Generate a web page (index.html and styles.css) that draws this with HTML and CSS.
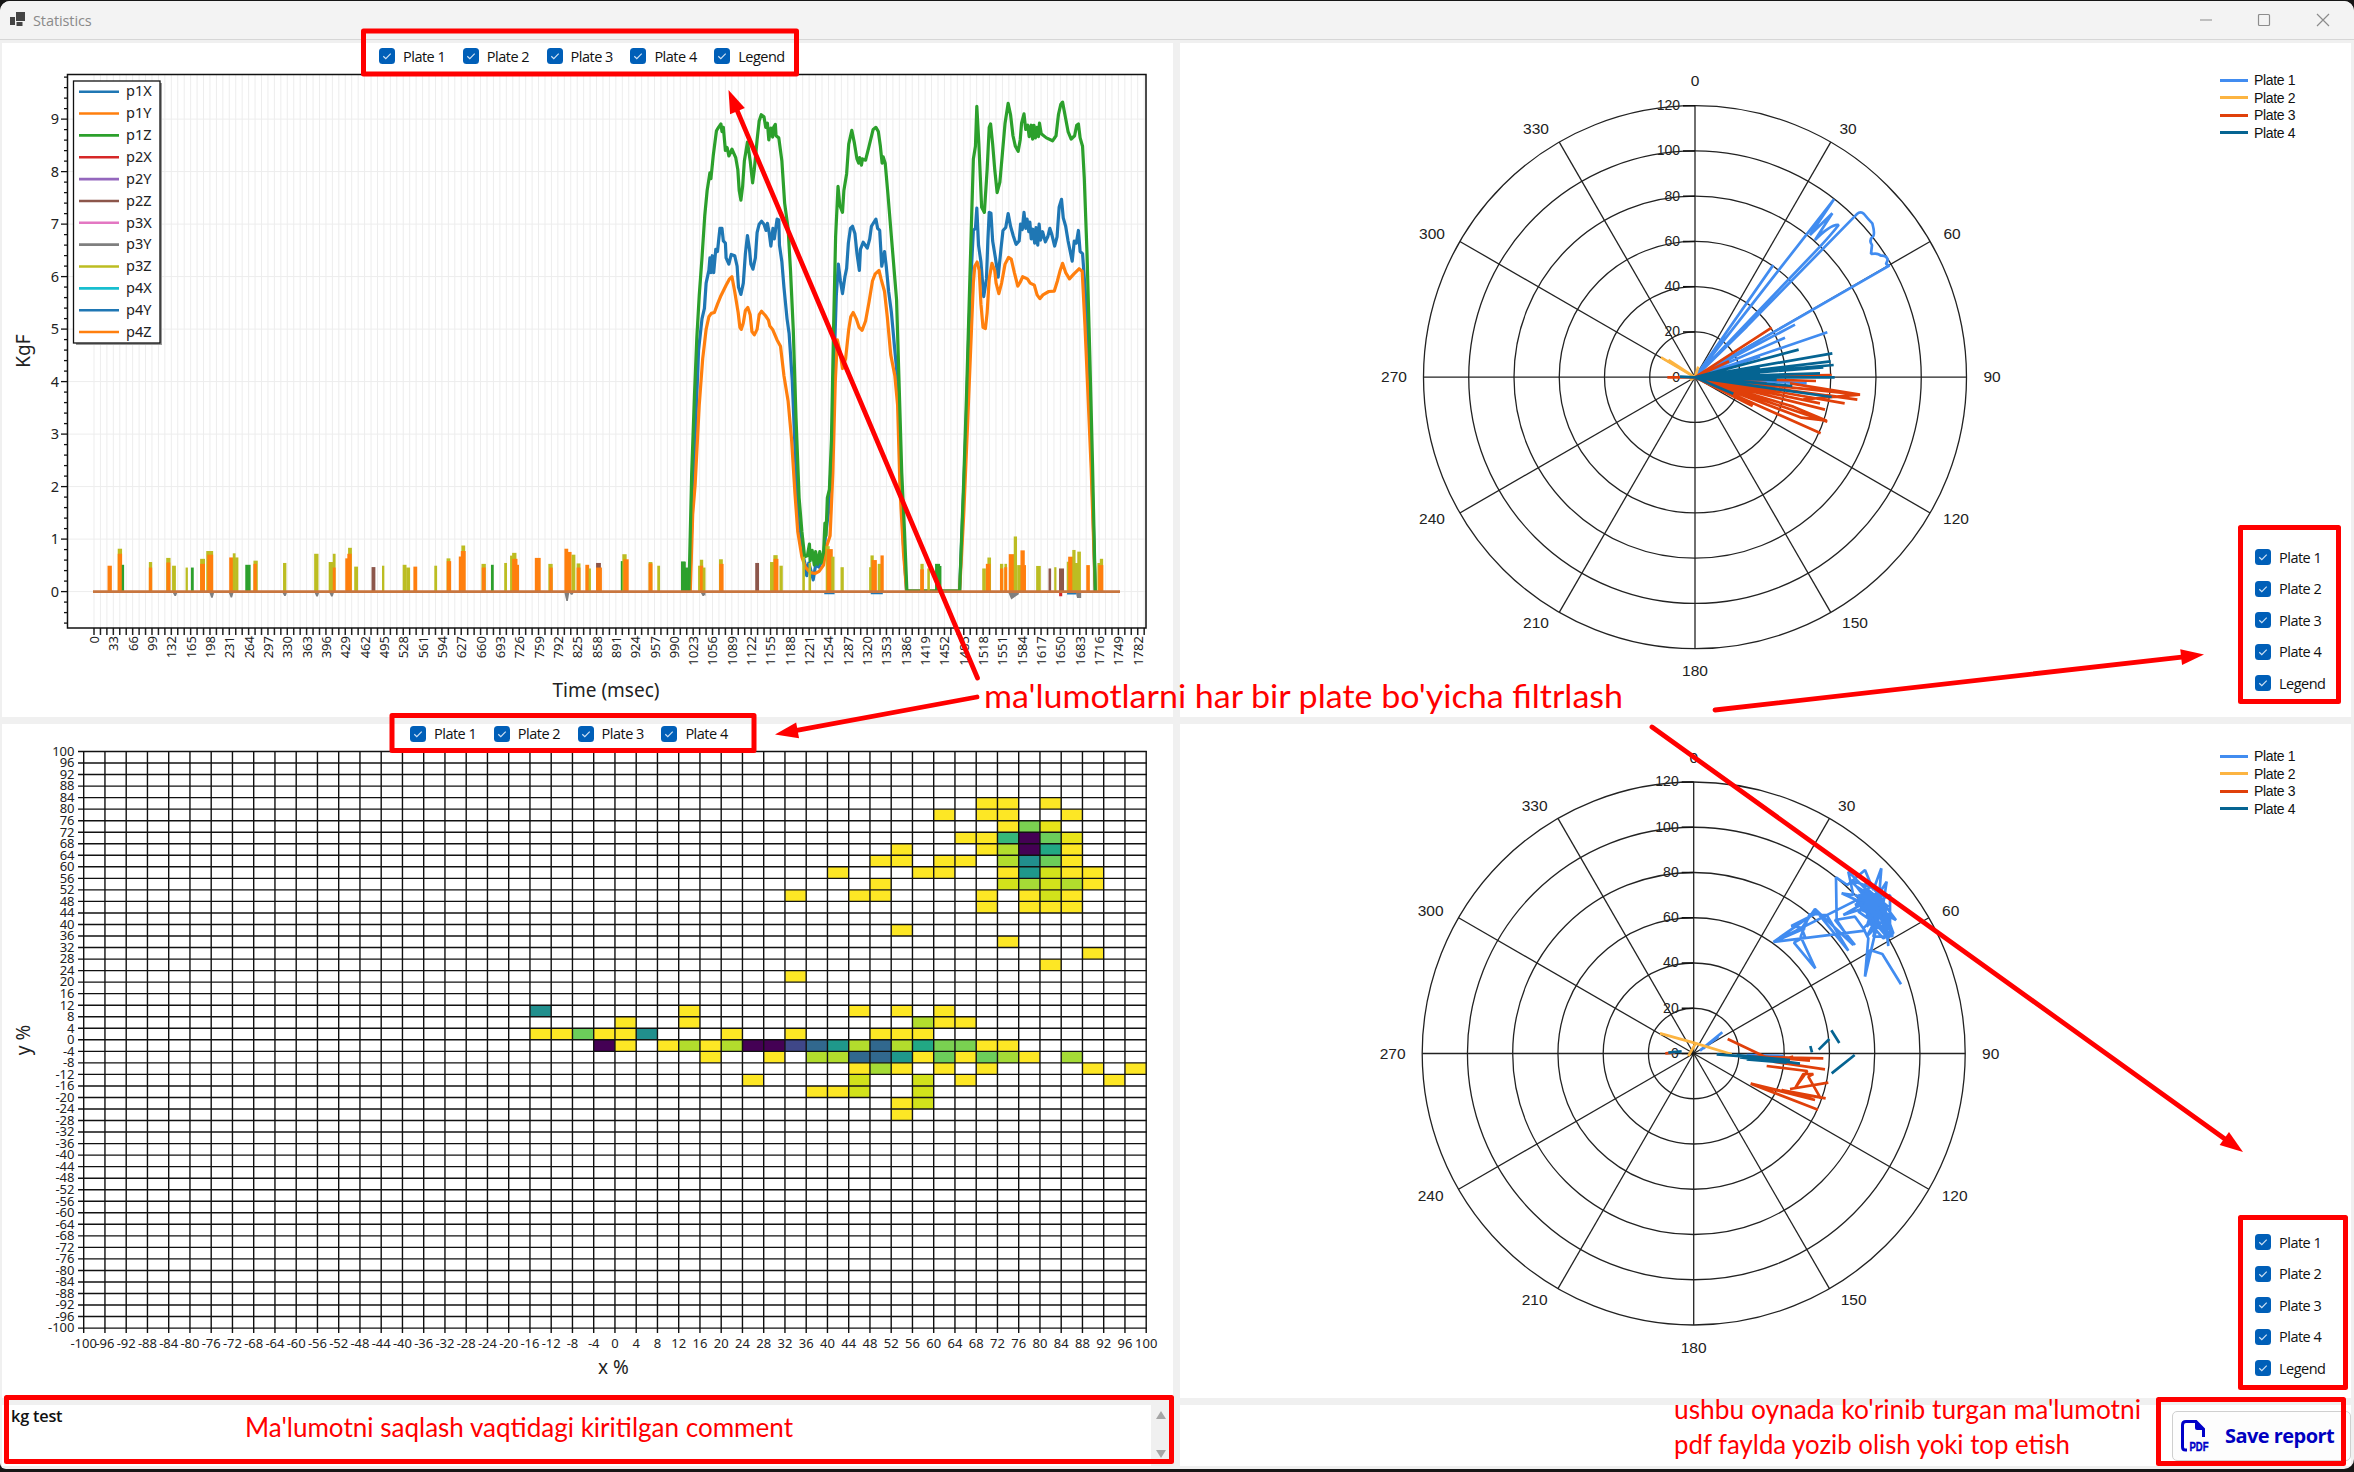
FILE: index.html
```html
<!DOCTYPE html>
<html lang="uz">
<head>
<meta charset="utf-8">
<title>Statistics</title>
<link rel="stylesheet" href="styles.css">
</head>
<body>
<div class="window">
  <header class="titlebar">
    <svg class="app-icon" viewBox="0 0 16 15"><path d="M6 0h9v9H6zM0 5h5v8H0zM6.500 10h6v4h-6z" fill="#444"/></svg>
    <span class="title">Statistics</span>
    <svg class="controls" viewBox="0 0 132 16" fill="none" stroke="#8c8c8c" stroke-width="1.200"><path d="M1 8h12"/><rect x="59.500" y="2.500" width="11" height="11" rx="1"/><path d="M118 2l12 12M130 2l-12 12"/></svg>
  </header>
  <main class="grid">
    <section class="panel column">
      <div class="checks bar first" data-items="Plate 1,Plate 2,Plate 3,Plate 4,Legend"></div>
      <svg class="chart" id="force" viewBox="2 73 1171 644"></svg>
    </section>
    <section class="panel">
      <svg class="chart" id="polarA" viewBox="1180 43 1040 674"></svg>
      <aside class="side">
        <ul class="keys"><li class="k1">Plate 1</li><li class="k2">Plate 2</li><li class="k3">Plate 3</li><li class="k4">Plate 4</li></ul>
        <div class="checks stack" data-items="Plate 1,Plate 2,Plate 3,Plate 4,Legend"></div>
      </aside>
    </section>
    <section class="panel column">
      <div class="checks bar second" data-items="Plate 1,Plate 2,Plate 3,Plate 4"></div>
      <svg class="chart" id="heat" viewBox="2 744 1171 654"></svg>
    </section>
    <section class="panel">
      <svg class="chart" id="polarB" viewBox="1180 724 1040 674"></svg>
      <aside class="side lower">
        <ul class="keys"><li class="k1">Plate 1</li><li class="k2">Plate 2</li><li class="k3">Plate 3</li><li class="k4">Plate 4</li></ul>
        <div class="checks stack" data-items="Plate 1,Plate 2,Plate 3,Plate 4,Legend"></div>
      </aside>
    </section>
    <section class="panel comment">
      <p>kg test</p>
      <div class="scroll"><i class="up"></i><i class="down"></i></div>
    </section>
    <section class="panel actions">
      <button class="save">
        <svg viewBox="0 0 28 32"><path d="M6 30H4.500Q1.500 30 1.500 27V5Q1.500 1.500 5 1.500H15L22.500 9V17" fill="none" stroke="#0000c8" stroke-width="3"/><path d="M14 1l9 9h-7q-2 0-2-2z" fill="#0000c8"/><text x="8.500" y="31" textLength="19" lengthAdjust="spacingAndGlyphs">PDF</text></svg>
        <span>Save report</span>
      </button>
    </section>
  </main>
</div>
<svg class="notes" id="notes" viewBox="0 0 2354 1472">
  <g class="frames">
    <rect x="363.500" y="31" width="433" height="43"/>
    <rect x="392" y="715.500" width="362" height="35"/>
    <rect x="6.500" y="1397.500" width="1165" height="64"/>
    <rect x="2240.500" y="527.500" width="98" height="174"/>
    <rect x="2240.500" y="1217.500" width="105" height="170"/>
    <rect x="2158.500" y="1399.500" width="185" height="64"/>
  </g>
  <text x="984" y="708" font-size="32" textLength="639" lengthAdjust="spacingAndGlyphs">ma'lumotlarni har bir plate bo'yicha filtrlash</text>
  <text x="245" y="1437" font-size="27" textLength="548" lengthAdjust="spacingAndGlyphs">Ma'lumotni saqlash vaqtidagi kiritilgan comment</text>
  <text x="1674" y="1419" font-size="27" textLength="467" lengthAdjust="spacingAndGlyphs">ushbu oynada ko'rinib turgan ma'lumotni</text>
  <text x="1674" y="1454" font-size="27" textLength="396" lengthAdjust="spacingAndGlyphs">pdf faylda yozib olish yoki top etish</text>
</svg>
<script src="charts.js"></script>
</body>
</html>
```
FILE: styles.css
```css
* { box-sizing: border-box; }
body { margin: 0; padding-top: 1px; width: 2354px; height: 1472px; overflow: hidden; background: #161616; font-family: "Open Sans", "Noto Sans", sans-serif; color: #111; }
.window { height: 1468px; background: #f0f0f0; border-radius: 10px 10px 10px 6px; overflow: hidden; display: flex; flex-direction: column; }
.titlebar { height: 39px; flex: none; background: #f3f3f3; border-bottom: 1px solid #d6d6d6; display: flex; align-items: center; padding: 0 23px 0 10px; }
.app-icon { width: 16px; height: 15px; margin-top: -2px; }
.title { font-size: 14.500px; color: #8a8a8a; margin-left: 7px; letter-spacing: -0.100px; }
.controls { width: 132px; height: 16px; margin-left: auto; }
.grid { display: grid; grid-template-columns: 1171px 1171px; grid-template-rows: 674px 674px 61px; gap: 7px; padding: 3px 2px; }
.panel { background: #fff; display: flex; overflow: hidden; min-width: 0; }
.column { flex-direction: column; }
.chart { display: block; flex: 1; min-height: 0; min-width: 0; overflow: visible; }
.checks { display: flex; flex: none; font-size: 14.500px; letter-spacing: -0.500px; }
.check { display: flex; align-items: center; gap: 8px; white-space: nowrap; }
.check svg { width: 16px; height: 16px; flex: none; }
.bar .check { width: 83.800px; }
.first { height: 30px; padding: 0 0 4px 377px; }
.second { height: 20px; padding: 0 0 1px 408px; }
.side { width: 131px; display: flex; flex-direction: column; justify-content: space-between; padding: 29px 0 18px; }
.lower { padding: 24px 0 14px; }
.keys { list-style: none; margin: 0; padding: 0; font: 14px/17.500px "Liberation Sans", sans-serif; letter-spacing: -0.350px; }
.keys li { display: flex; align-items: center; gap: 6px; }
.keys li::before { content: ""; width: 28px; height: 3px; background: currentColor; margin-top: -1px; }
.keys .k1::before { background: #418cf0; }
.keys .k2::before { background: #fcb441; }
.keys .k3::before { background: #e0400a; }
.keys .k4::before { background: #056492; }
.stack { flex-direction: column; padding-left: 35px; }
.stack .check { height: 31.500px; }
.comment { justify-content: space-between; }
.comment p { margin: 0 0 0 9px; font-size: 16.300px; font-weight: 600; letter-spacing: -0.200px; }
.scroll { width: 22px; background: #f0f0f0; display: flex; flex-direction: column; justify-content: space-between; padding: 6px 5px 8px; }
.scroll i { border: 5.500px solid transparent; width: 0; }
.scroll .up { border-top: 0; border-bottom: 8px solid #a5a5a5; }
.scroll .down { border-bottom: 0; border-top: 8px solid #a5a5a5; }
.actions { justify-content: flex-end; align-items: center; }
.save { width: 179px; height: 50px; border: 1px solid #cfcfcf; border-radius: 5px; background: #fdfdfd; display: flex; align-items: center; gap: 16px; padding: 0 0 0 8px; color: #0000c0; font: 700 20px "Open Sans", sans-serif; white-space: nowrap; letter-spacing: -0.550px; }
.save svg { width: 28px; height: 32px; flex: none; overflow: visible; }
.save text { font: 700 12px "Liberation Sans", sans-serif; fill: #0000c8; letter-spacing: 0; stroke: #0000c8; stroke-width: .4; }
.notes { position: absolute; left: 0; top: 0; width: 2354px; height: 1472px; pointer-events: none; fill: #f00; font-family: Lato, sans-serif; }
.frames rect { fill: none; stroke: #f00; stroke-width: 5; stroke-linejoin: round; }
.arrow { stroke: #f00; stroke-width: 4.800; stroke-linecap: round; }
.tick { font: 13px "Noto Sans", sans-serif; fill: #222; }
.ytick { font: 14.500px "Noto Sans", sans-serif; fill: #222; }
.axis { font: 19px "Noto Sans", sans-serif; fill: #222; text-anchor: middle; }
.angle { font: 15.500px "Liberation Sans", sans-serif; fill: #222; text-anchor: middle; }
.radial { font: 14px "Liberation Sans", sans-serif; fill: #222; text-anchor: end; }
.trace { fill: none; stroke-width: 3.200; stroke-linejoin: round; vector-effect: non-scaling-stroke; }
.ray { fill: none; stroke-width: 2.700; vector-effect: non-scaling-stroke; stroke-linejoin: bevel; }
```
FILE: charts.js
```js
const put = (id, html) => document.getElementById(id).insertAdjacentHTML('beforeend', html);
const line = (x1, y1, x2, y2, c = '#111', w = 1) => `<path d="M${x1} ${y1}L${x2} ${y2}" stroke="${c}" stroke-width="${w}"/>`;

// Check boxes
document.querySelectorAll('.checks').forEach(box => {
  box.innerHTML = box.dataset.items.split(',').map(t =>
    `<label class="check"><svg viewBox="0 0 16 16"><rect width="16" height="16" rx="3.500" fill="#005fb8"/><path d="M4.300 8.300L6.800 10.700L11.700 5.700" fill="none" stroke="#cfe2f5" stroke-width="1.200"/></svg>${t}</label>`).join('');
});

// Force over time
const BLUE = '#1f77b4', ORANGE = '#ff7f0e', GREEN = '#2ca02c', OLIVE = '#bcbd22', BROWN = '#8c564b', GREY = '#7f7f7f';
let s = '';
const tx = t => 94 + t * 0.5857, ty = v => 591.6 - v * 52.5;
for (let t = 0; t <= 1793; t += 11) {
  s += line(tx(t), 75, tx(t), 628, '#ededed') + line(tx(t), 628, tx(t), 635, '#222', 1.5);
  if (t % 33 === 0) s += `<text class="tick" text-anchor="end" transform="translate(${tx(t) + 5} 636) rotate(-90)">${t}</text>`;
}
for (let i = -3; i <= 49; i++) s += line(i % 5 ? 64 : 61, ty(i / 5), 67, ty(i / 5), '#111', 1.3);
for (let v = 0; v < 10; v++) s += line(67, ty(v), 1146, ty(v), '#ededed') + `<text class="ytick" text-anchor="end" x="59" y="${ty(v) + 5}">${v}</text>`;
const spikes = `215 7 1232 o;235 7 1195 y;235 7 1206 o;241 3 1230 g;295 5 1224 y;295 5 1236 o;330 7 1215 y;330 6 1225 o;341 6 1232 y;366 3 1236 y;377 4 1236 g;397 8 1217 y;397 8 1228 o;411 12 1200 y;412 10 1208 o;454 8 1214 o;459 4 1205 y;464 5 1214 y;486 9 1230 g;501 7 1221 y;500 5 1228 o;558 5 1226 y;620 7 1206 y;649 8 1224 y;655 4 1206 y;655 4 1236 o;680 5 1216 o;686 6 1193 y;685 7 1206 o;698 6 1234 y;732 6 1235 b;751 3 1232 y;793 6 1230 y;800 6 1236 y;814 6 1234 o;854 4 1232 y;879 6 1216 y;880 7 1222 o;903 6 1212 o;908 6 1188 y;908 8 1200 o;948 7 1228 y;948 6 1236 o;965 4 1230 g;991 4 1226 y;1003 5 1210 y;1008 7 1204 y;1009 9 1217 o;1014 5 1230 o;1054 10 1215 o;1079 7 1228 y;1080 5 1236 o;1110 6 1195 o;1116 7 1202 o;1124 6 1208 y;1134 6 1227 y;1134 6 1236 o;1151 6 1230 o;1156 3 1238 y;1173 8 1226 b;1174 10 1236 o;1220 5 1222 g;1224 7 1207 y;1227 9 1218 o;1275 6 1224 y;1275 6 1227 o;1291 4 1232 y;1339 7 1223 g;1346 7 1236 g;1372 6 1232 y;1375 5 1219 y;1375 5 1232 o;1380 4 1236 y;1413 6 1218 y;1414 7 1228 o;1484 6 1226 b;1514 8 1224 y;1520 7 1209 y;1521 8 1217 o;1531 5 1232 y`;
const late = `475 6 1180 y;493 6 1195 y;545 10 1155 y;551 16 1162 o;560 8 1180 y;587 8 1205 y;670 8 1205 y;674 8 1177 y;680 14 1188 o;695 8 1197 y;703 8 1177 o;819 8 1197 y;819 9 1210 o;838 6 1208 y;864 13 1197 g;871 7 1202 g;999 9 1208 y;1014 9 1182 y;1011 12 1197 o;1050 8 1197 y;1062 6 1197 y;1050 8 1208 o;1062 7 1205 o;1079 15 1174 o;1090 8 1132 y;1102 12 1200 y;1111 11 1165 o;1117 6 1200 o;1157 12 1202 y;1190 6 1208 b;1206 5 1205 y;1224 13 1208 b;1245 10 1192 y;1252 16 1180 o;1260 8 1164 y;1267 8 1195 y;1275 9 1168 y;1301 9 1200 o;1333 8 1195 y;1340 8 1185 y;1338 13 1200 o`;
const hue = { o: ORANGE, y: OLIVE, g: GREEN, b: BROWN };
const bars = (list, base) => list.split(';').map(r => { const [x, v, y, c] = r.split(' '), w = +v + 1.5; return `<rect x="${x - w / 2}" y="${y}" width="${w}" height="${base - y}" fill="${hue[c]}"/>`; }).join('');
const early = [[343, 1298], [415, 1302], [453, 1301], [558, 1298], [621, 1299], [650, 1299], [1111, 1309], [1120, 1295], [1378, 1298]];
s += `<g transform="scale(.5102 .45918)">${early.map(([x, y]) => `<path d="M${x - 5} 1289h10l-3 ${y - 1289}h-3z" fill="${GREY}"/>`).join('')}${bars(spikes, 1289)}</g>`;
const tr = (pts, c) => `<polyline class="trace" stroke="${c}" points="${pts}"/>`;
const blue = `144,1262 152,1060 160,900 170,690 180,615 187,590 192,530 200,500 203,470 206,505 210,465 214,505 220,450 225,455 232,400 238,400 242,430 248,435 250,470 258,485 265,462 275,465 282,490 286,540 293,557 300,530 306,460 312,417 318,450 322,485 328,497 335,470 340,410 346,390 353,383 360,390 366,405 370,388 375,410 380,442 386,400 390,425 398,378 403,380 405,440 412,480 418,540 427,615 433,650 442,760 450,920 460,1100 470,1165 480,1200 484,1225 490,1195 497,1215 503,1235 510,1200 520,1205 533,1180 540,1120 548,1070 557,930 563,740 570,560 576,485 582,525 588,555 595,515 600,495 605,435 611,400 617,395 624,412 630,460 637,500 640,450 648,433 660,447 667,425 672,395 685,378 690,400 696,405 702,490 710,455 715,490 722,550 730,600 740,690 748,760 755,950 765,1150 774,1262 928,1262 940,1020 948,840 955,640 962,500 968,405 974,400 978,352 983,440 990,480 998,562 1006,520 1010,430 1014,362 1019,364 1024,430 1032,470 1040,516 1048,450 1054,405 1062,398 1069,365 1076,395 1084,418 1092,438 1101,430 1105,390 1110,403 1115,362 1120,400 1124,378 1129,408 1132,385 1136,425 1141,402 1146,435 1150,398 1155,440 1159,390 1163,428 1169,408 1177,432 1184,420 1190,400 1195,412 1204,442 1211,420 1217,350 1224,331 1229,375 1236,395 1243,430 1255,478 1261,430 1267,435 1273,405 1278,455 1285,460 1293,550 1300,700 1310,920 1322,1262`;
const orange = `146,1262 153,1080 160,1010 172,820 182,710 192,640 200,610 207,602 216,600 225,580 235,560 250,535 260,520 267,515 275,550 285,600 290,635 294,640 300,625 306,595 313,588 320,605 325,645 332,653 340,640 346,605 353,597 364,607 373,618 377,632 385,640 398,665 408,680 418,750 430,810 440,900 450,1030 458,1120 470,1180 480,1205 495,1218 508,1220 520,1215 533,1200 542,1155 552,1130 560,980 567,765 573,665 580,690 588,733 597,710 606,640 612,610 619,600 628,615 636,635 645,642 655,620 665,575 675,525 683,508 694,500 700,520 710,550 718,610 728,700 740,750 748,820 755,1020 765,1170 774,1262 928,1262 940,1080 952,850 962,650 968,530 972,490 979,480 985,500 990,580 996,635 1003,638 1008,600 1014,520 1022,483 1030,500 1034,530 1042,555 1050,530 1060,485 1070,469 1078,473 1087,505 1097,537 1104,528 1111,515 1125,520 1133,530 1145,535 1153,558 1161,567 1170,558 1187,550 1203,549 1212,525 1220,500 1227,483 1236,505 1247,520 1260,508 1275,496 1284,502 1292,630 1300,780 1310,970 1322,1262`;
const green = `142,1262 150,985 158,800 165,660 172,560 180,470 188,370 195,310 203,268 206,282 213,225 222,168 228,160 235,152 238,170 242,160 248,215 253,208 258,228 267,212 278,232 284,260 288,310 293,333 298,300 303,240 312,195 320,240 327,292 332,260 340,190 346,145 352,130 360,135 365,160 370,150 374,190 380,162 385,183 388,160 393,153 395,180 403,185 412,240 420,340 430,400 437,500 445,640 453,850 462,1040 470,1120 478,1180 486,1178 492,1150 494,1190 500,1165 506,1200 510,1168 516,1198 522,1168 526,1195 533,1170 537,1100 540,1130 544,1040 550,1020 556,900 562,640 568,420 575,300 580,345 588,362 592,310 600,270 606,200 615,167 622,195 630,235 635,245 638,232 643,250 646,235 655,238 665,205 677,165 685,160 692,170 698,205 703,245 706,230 712,245 720,320 730,420 745,570 752,760 760,980 768,1120 775,1262 928,1262 940,1000 948,800 955,600 962,400 968,235 974,205 978,110 984,200 992,350 1000,362 1008,260 1014,160 1018,152 1024,200 1030,260 1037,315 1045,290 1052,225 1060,150 1069,103 1076,130 1083,180 1090,205 1098,217 1104,190 1108,150 1115,128 1120,165 1126,155 1130,182 1136,155 1140,188 1144,155 1148,185 1153,160 1157,182 1160,150 1165,175 1180,185 1198,192 1208,180 1215,130 1222,105 1227,100 1235,135 1243,170 1252,188 1262,180 1268,155 1273,152 1278,185 1285,205 1290,280 1298,460 1306,700 1314,960 1322,1262`;
s += `<g transform="translate(640 60) scale(.34439 .42092)">${tr(blue, BLUE)}${tr(orange, ORANGE)}${tr(green, GREEN)}${bars('126 12 1192 g;138 7 1208 g', 1262)}<path d="M178 1266l12 7v-8zM1070 1266l8 16 22-13v-4zM1265 1264h16v14h-12z" fill="${GREY}"/><rect x="1217" y="1264" width="9" height="10" fill="#d62728"/><path d="M670 1266h35M1240 1267h26M535 1266h30" stroke="${BLUE}" stroke-width="6"/>${bars(late, 1262)}</g>`;
s += line(93, 591.6, 1120, 591.6, '#c8763f', 2.8);
s += '<rect x="67.500" y="74.500" width="1078.500" height="553.500" fill="none" stroke="#111" stroke-width="1.500"/>';
s += '<rect x="76" y="83" width="86" height="262" fill="#999"/><rect x="73.500" y="81" width="86.500" height="262" fill="#fff" stroke="#111" stroke-width="1.300"/>';
['p1X', 'p1Y', 'p1Z', 'p2X', 'p2Y', 'p2Z', 'p3X', 'p3Y', 'p3Z', 'p4X', 'p4Y', 'p4Z'].forEach((n, i) => {
  const y = 91.7 + i * 21.85;
  s += line(79, y, 119, y, [BLUE, ORANGE, GREEN, '#d62728', '#9467bd', BROWN, '#e377c2', GREY, OLIVE, '#17becf', BLUE, ORANGE][i], 2.6) + `<text class="ytick" x="126" y="${y + 4.7}">${n}</text>`;
});
s += '<text class="axis" x="606" y="697">Time (msec)</text><text class="axis" transform="translate(29.500 351) rotate(-90)">KgF</text>';
put('force', s);

// Heat map of pressure centres: row index, then column + shade
const shade = { y: '#fde725', e: '#e8e419', d: '#d2e21b', l: '#b2dd2d', a: '#a5db36', g: '#6ccd5a', h: '#7ad151', m: '#35b779', s: '#22a884', t: '#1f988b', c: '#218f8d', b: '#31688e', i: '#3f4788', p: '#440154' };
const rows = { 4: '42y43y45y', 5: '40y42y43y46y', 6: '43y44h45e', 7: '41y42y43m44p45g46e', 8: '38y42y43l44p45s46y', 9: '37y38y40y41y43l44c45g46y', 10: '35y39y40y43y44t45d46y47y', 11: '37y43d44a45d46l47y', 12: '33y36y37y42y44y45d46y', 13: '42y44y45y46y', 15: '38y', 16: '43y', 17: '47y', 18: '45y', 19: '33y', 22: '21c28y36y38y40y', 23: '25y28y39l40y41y', 24: '21y22y23g24y25y26c30y33y37y38y39y', 25: '24p25y27y28l29y30l31p32p33i34b35t36l37b38l39s40h41h42y43y', 26: '29y32y34l35l36b37b38t39y40g41y42g43a44y46a', 27: '36y37a38y40y42y47y49y', 28: '31y36d39d41y48y', 29: '34y35y36d39d', 30: '38y39d', 31: '38y' };
s = '';
const cx = i => 83.7 + i * 21.25, cy = i => 751.5 + i * 11.532;
for (const r in rows) for (const [, c, k] of rows[r].matchAll(/(\d\d)(\w)/g)) s += `<rect x="${cx(+c)}" y="${cy(+r)}" width="21.250" height="11.530" fill="${shade[k]}"/>`;
for (let i = 0; i <= 50; i++) {
  s += line(cx(i), 751, cx(i), 1333, '#111', 1.4) + line(78, cy(i), 1146.8, cy(i), '#111', 1.4);
  s += `<text class="tick" text-anchor="middle" x="${cx(i)}" y="1347.500">${i * 4 - 100}</text><text class="tick" text-anchor="end" x="74.500" y="${cy(i) + 4.3}">${100 - i * 4}</text>`;
}
s += '<text class="axis" x="613.500" y="1374">x %</text><text class="axis" transform="translate(30 1040) rotate(-90)">y %</text>';
put('heat', s);

// Polar charts
const P1 = '#418cf0', P2 = '#fcb441', P3 = '#e0400a', P4 = '#056492';
const seat = { 0: [0, -296], 30: [153, -248], 60: [257, -143], 90: [297, 0], 120: [261, 142], 150: [160, 246], 180: [0, 294], 210: [-159, 246], 240: [-263, 142], 270: [-301, 0], 300: [-263, -143], 330: [-159, -248] };
function polar(id, x, y, oy, data) {
  let p = '';
  for (let i = 1; i < 7; i++) p += `<circle cx="${x}" cy="${y}" r="${i * 45.25}" fill="none" stroke="#222" stroke-width="1.300"/>`;
  for (let a = 0; a < 360; a += 30) {
    const r = a * Math.PI / 180;
    p += line(x, y, x + 271.5 * Math.sin(r), y - 271.5 * Math.cos(r), '#222', 1.3);
    p += `<text class="angle" x="${x + seat[a][0]}" y="${y + seat[a][1] + 5}">${a}</text>`;
  }
  for (let i = 0; i < 7; i++) p += line(x - 12, y - i * 45.25, x, y - i * 45.25, '#111', 1.5) + `<text class="radial" x="${x - 15}" y="${y - i * 45.25 + 4.3}">${i * 20}</text>`;
  p += `<g transform="translate(1560 ${oy}) scale(.33333)">` + data.map(([c, d]) => `<path class="ray" stroke="${c}" d="${d}"/>`).join('') + '</g>';
  put(id, p);
}
const fan = list => list.split(' ').map(q => 'M405 682L' + q).join('');
polar('polarA', 1695, 377.2, 150, [
  [P1, fan('640,345 636,350 705,524 675,563 802,547 740,700 600,620') + 'M405 682L822 148L750 255L817 190L765 270Q815 220 836 225Q815 252 780 290L405 682L560 530L890 193Q902 182 912 192Q925 208 937 220Q945 250 940 258Q925 270 936 285L933 312Q955 308 962 317Q980 315 983 330L978 342L988 347L405 682'],
  [P2, fan('303,622 325,630 415,650 660,730 390,690')],
  [P3, fan('635,533 507,634 322,682 815,675 768,693 900,734 892,749 854,760 780,760 795,779 802,815 782,850 578,768 620,700') + 'M405 682L700 770L800 812L725 803L405 682M690 700L900 734L730 748M800 735L892 749'],
  [P4, fan('716,599 817,610 812,634 821,645 780,670 824,682 815,741 697,708 520,731 360,680 790,652 600,670 650,690 600,655')]
]);
polar('polarB', 1693.7, 1053.5, 840, [
  [P1, 'M420 632L487 577M430 625L475 590M560 645L670 648M766 385L702 308L735 290L725 265L765 207L880 315L830 240L828 112L862 135L915 90L940 150L964 85L958 160L980 125L970 190L1008 240L970 220L998 290L950 260L915 410L930 330L967 342L1023 433M640 306L930 160L865 95L880 165L845 160L910 190L850 225L925 200M640 306L915 272L885 230L825 240L885 315M640 306L735 265L694 258L765 222L800 225L865 332L770 215L640 306M702 308L766 385L722 290L750 220M915 410L925 295L910 265L960 215L920 290L975 235L985 318L975 190L930 250L970 295L1000 280L960 170L920 120L905 190L955 225L890 140L955 180L915 210L975 160L930 140L890 185L960 215L940 290L990 290L990 165L895 215L960 260L940 190L870 120L955 150L920 260L970 210L885 165L985 200L925 150L975 265L930 235L995 230L910 175L950 280L915 155L965 225L900 195L980 290L950 160L905 210L985 245L940 165L885 195L965 190L920 225L990 280'],
  [P1, 'M900 150L955 230L905 170L960 210L910 190L970 240L925 155L950 250L935 160L970 200L895 165L960 175L920 215L955 190L915 200L965 165L910 160L940 270M945 165L930 220L960 165L935 230M895 180L970 185L900 205L965 205M920 175L950 175L920 195L955 200L920 210L960 220'],
  [P2, 'M300 580L400 608L515 643M385 648L406 612'],
  [P3, 'M316 640L345 638M503 597L615 650L750 662M575 650L790 655M700 650L640 665L795 688M620 678L742 693L705 745L730 702L760 702L745 710L782 775M690 747L805 728M572 731L660 752L797 775L665 750L765 780L572 731L774 809'],
  [P4, 'M470 643L690 660L530 645L720 671M540 652L680 668L560 658M325 638L365 634M751 618L756 637M776 629L808 597M814 571L838 609M815 700L884 645']
]);

// Annotation arrows
put('notes', [[977.5, 678, 728.5, 90], [977, 697, 775, 734.5], [1715, 710, 2204, 654.5], [1652, 727, 2243, 1152]].map(([a, b, c, d]) => {
  const r = Math.atan2(d - b, c - a), bx = c - 18 * Math.cos(r), by = d - 18 * Math.sin(r);
  return `<path class="arrow" d="M${a} ${b}L${bx} ${by}"/><path d="M0 0L-23 -8L-23 8z" transform="translate(${c} ${d}) rotate(${r * 180 / Math.PI})"/>`;
}).join(''));
```
